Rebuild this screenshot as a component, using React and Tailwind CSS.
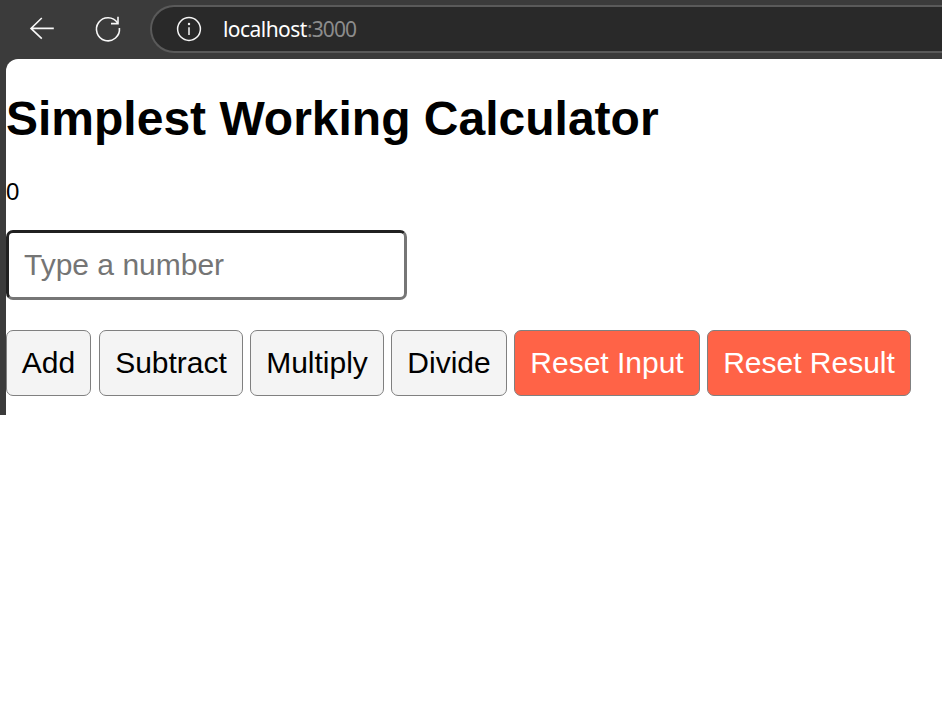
import React from "react";

const operations = [
  { label: "Add", width: "w-[85px] mr-2" },
  { label: "Subtract", width: "w-[144px] mr-[7px]" },
  { label: "Multiply", width: "w-[134px] mr-[7px]" },
  { label: "Divide", width: "w-[116px] mr-[7px]" },
];

const resets = [
  { label: "Reset Input", width: "w-[186px] mr-[7px]" },
  { label: "Reset Result", width: "w-[204px]" },
];

const buttonBase =
  "h-[66px] shrink-0 rounded-[7px] border border-[#808080] text-center text-[30px] leading-[34px] whitespace-nowrap";

function BackIcon() {
  return (
    <svg className="h-[59px] w-[28px] shrink-0" viewBox="28 0 28 59" fill="none" stroke="#f8f8f8" strokeWidth="1.6">
      <path d="M53.8 28.4H30.8M41.8 18L31 28.4L41.8 38.6" />
    </svg>
  );
}

function ReloadIcon() {
  return (
    <svg className="ml-[38px] h-[59px] w-[28px] shrink-0" viewBox="94 0 28 59" fill="none" stroke="#f8f8f8" strokeWidth="1.6">
      <path d="M119.4 28A11.5 11.5 0 1 1 117.6 23" />
      <path d="M118 16.8V23.6H111" />
    </svg>
  );
}

function InfoIcon() {
  return (
    <svg className="ml-[23px] h-[28px] w-[28px] shrink-0" viewBox="175 15 28 28" fill="none" stroke="#f5f5f5" strokeWidth="1.5">
      <circle cx="189" cy="29" r="11.4" />
      <path d="M189 27.3V35" />
      <circle cx="189" cy="24" r="1.2" fill="#f5f5f5" stroke="none" />
    </svg>
  );
}

export default function App() {
  return (
    <div className="h-[707px] w-[942px] overflow-hidden bg-white font-['Liberation_Sans',Arial,sans-serif] text-black">
      <div className="h-[415px] bg-[#3b3b3b]">
        <header className="flex h-[59px] items-start pl-[28px]">
          <BackIcon />
          <ReloadIcon />
          <div className="mt-[5px] ml-[28px] flex h-[48px] flex-1 items-center rounded-l-full border-y-2 border-l-2 border-[#5a5a5a] bg-[#292929]">
            <InfoIcon />
            <div className="ml-[20px] flex text-[21px] leading-[28px] font-['Noto_Sans',sans-serif]">
              <span className="w-[84px] tracking-[-0.55px] text-white">localhost</span>
              <span className="tracking-[-0.9px] text-[#8c8c8c]">:3000</span>
            </div>
          </div>
        </header>
        <main className="ml-[6px] h-[356px] rounded-tl-[12px] bg-white pt-[32px]">
          <h1 className="h-[55px] text-[48px] leading-[55px] font-bold whitespace-nowrap">Simplest Working Calculator</h1>
          <p className="mt-[32px] h-[28px] text-[24px] leading-[28px]">0</p>
          <input
            className="mt-[24px] block h-[70px] w-[401px] rounded-[7px] border-[3px] border-t-[#202020] border-r-[#767676] border-b-[#767676] border-l-[#202020] bg-white px-[15px] text-[30px] placeholder:text-[#757575] focus:outline-none"
            type="number"
            placeholder="Type a number"
          />
          <div className="mt-[30px] flex">
            {operations.map(({ label, width }) => (
              <button key={label} className={`${buttonBase} ${width} bg-[#f4f4f4]`}>{label}</button>
            ))}
            {resets.map(({ label, width }) => (
              <button key={label} className={`${buttonBase} ${width} bg-[#ff6347] text-white`}>{label}</button>
            ))}
          </div>
        </main>
      </div>
    </div>
  );
}
